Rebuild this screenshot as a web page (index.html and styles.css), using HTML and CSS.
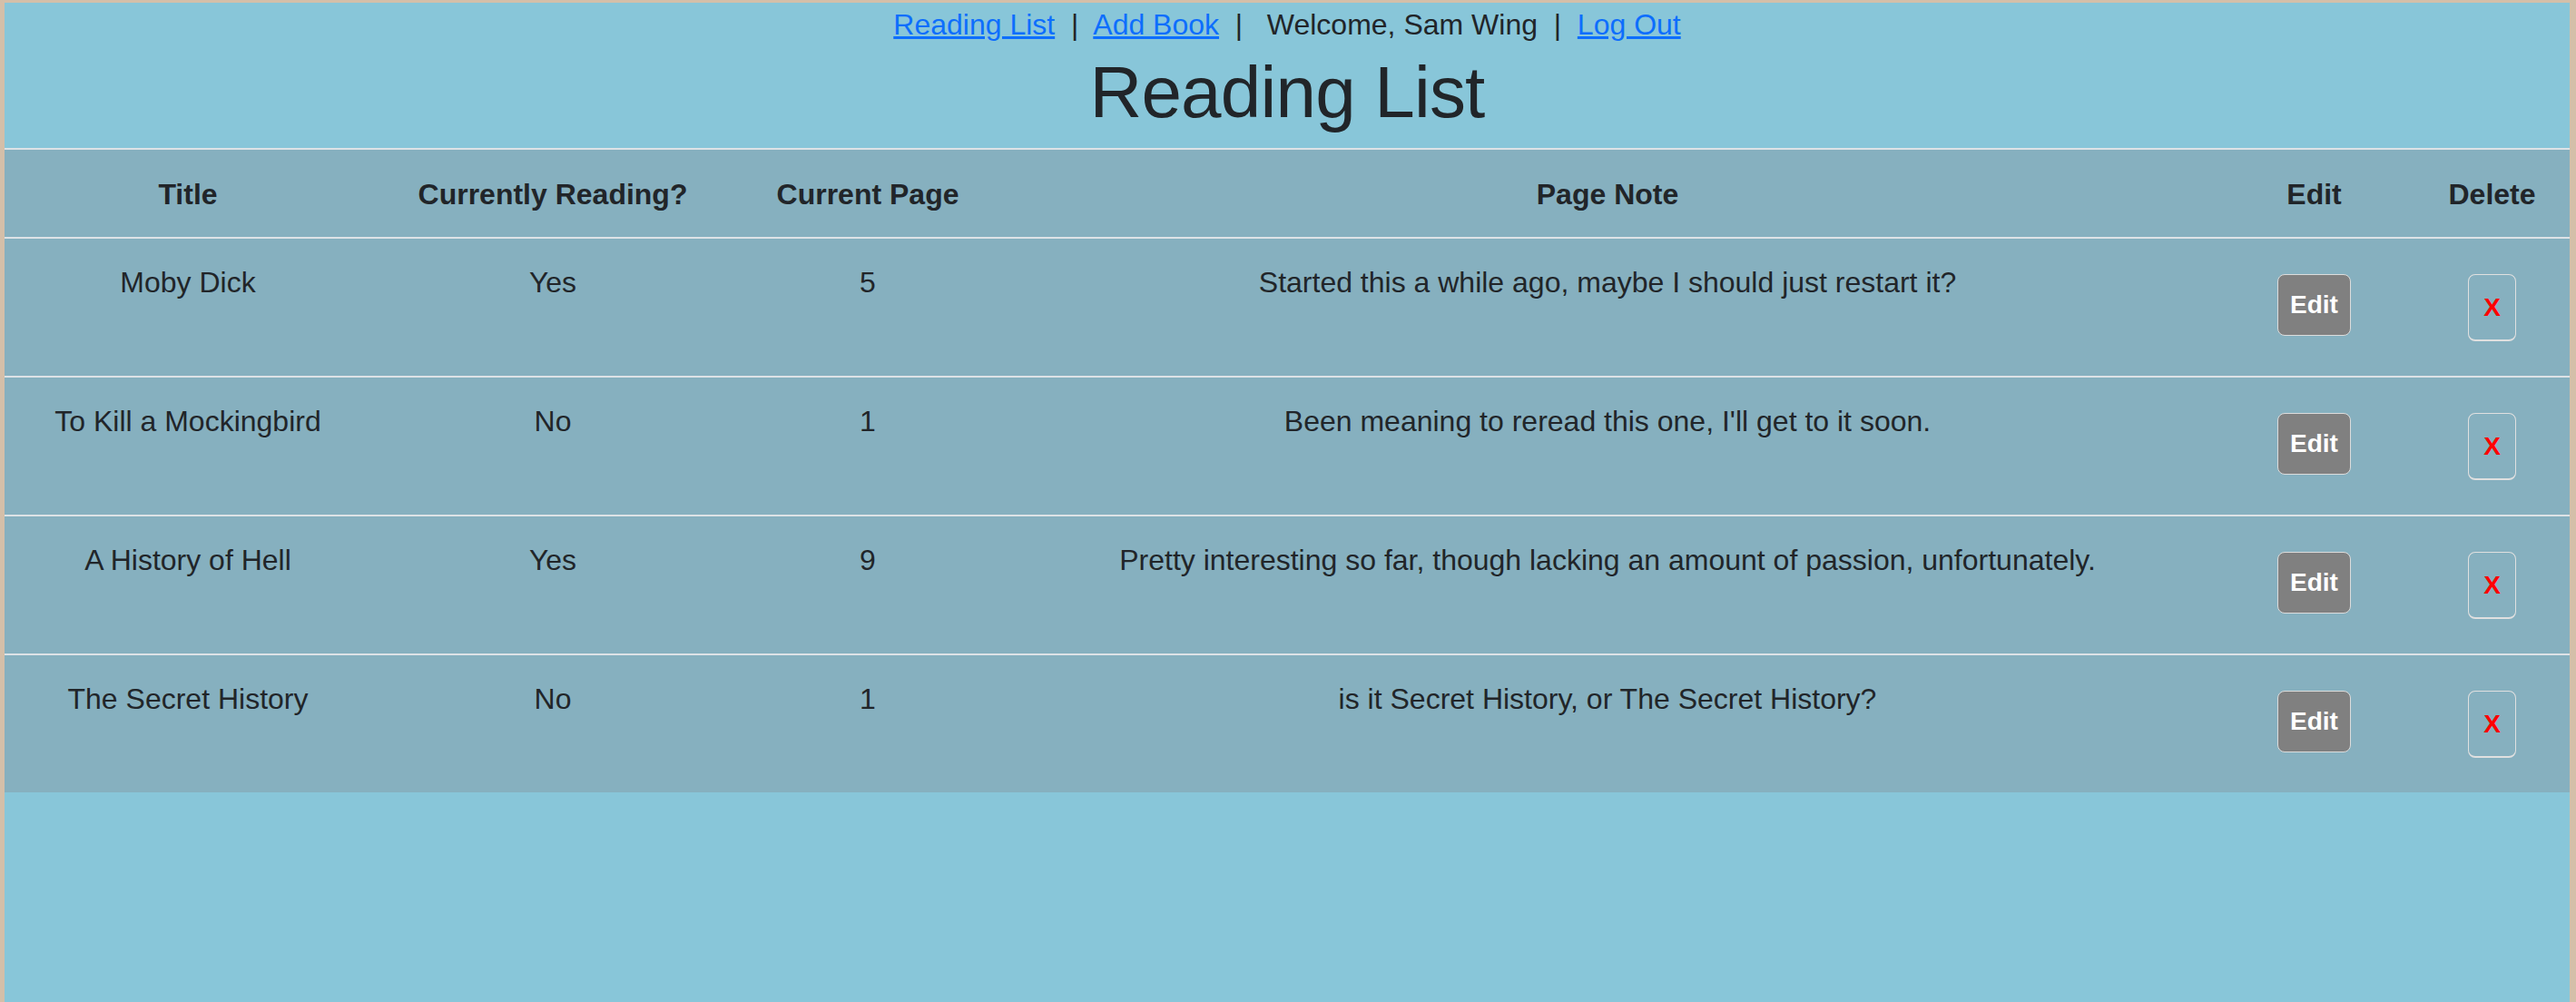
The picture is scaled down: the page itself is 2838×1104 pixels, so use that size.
FILE: index.html
```html
<!DOCTYPE html>
<html lang="en">
<head>
<meta charset="utf-8">
<title>Reading List</title>
<link rel="stylesheet" href="styles.css">
</head>
<body>
<div class="page">
  <nav class="topnav"><a href="#">Reading List</a>&nbsp; |&nbsp; <a href="#">Add Book</a>&nbsp; |&nbsp; &nbsp;Welcome, Sam Wing&nbsp; |&nbsp; <a href="#">Log Out</a></nav>
  <h1 class="title">Reading List</h1>
  <table class="books">
    <colgroup>
      <col class="c-title">
      <col class="c-reading">
      <col class="c-page">
      <col class="c-note">
      <col class="c-edit">
      <col class="c-delete">
    </colgroup>
    <thead>
      <tr>
        <th>Title</th>
        <th>Currently Reading?</th>
        <th>Current Page</th>
        <th>Page Note</th>
        <th>Edit</th>
        <th>Delete</th>
      </tr>
    </thead>
    <tbody>
      <tr>
        <td>Moby Dick</td>
        <td>Yes</td>
        <td>5</td>
        <td>Started this a while ago, maybe I should just restart it?</td>
        <td><button class="btn-edit" type="button">Edit</button></td>
        <td><button class="btn-delete" type="button">X</button></td>
      </tr>
      <tr>
        <td>To Kill a Mockingbird</td>
        <td>No</td>
        <td>1</td>
        <td>Been meaning to reread this one, I'll get to it soon.</td>
        <td><button class="btn-edit" type="button">Edit</button></td>
        <td><button class="btn-delete" type="button">X</button></td>
      </tr>
      <tr>
        <td>A History of Hell</td>
        <td>Yes</td>
        <td>9</td>
        <td>Pretty interesting so far, though lacking an amount of passion, unfortunately.</td>
        <td><button class="btn-edit" type="button">Edit</button></td>
        <td><button class="btn-delete" type="button">X</button></td>
      </tr>
      <tr>
        <td>The Secret History</td>
        <td>No</td>
        <td>1</td>
        <td>is it Secret History, or The Secret History?</td>
        <td><button class="btn-edit" type="button">Edit</button></td>
        <td><button class="btn-delete" type="button">X</button></td>
      </tr>
    </tbody>
  </table>
</div>
</body>
</html>
```

FILE: styles.css
```css
html, body {
  margin: 0;
  padding: 0;
}

body {
  background: #d4bfa9;
  font-family: "Liberation Sans", Arial, sans-serif;
  font-size: 32px;
  line-height: 1.5;
  color: #212529;
}

.page {
  margin: 3px 7px 0 5px;
  background: #88c6d9;
  min-height: calc(100vh - 3px);
}

.topnav {
  text-align: center;
  height: 48px;
}

.topnav a {
  color: #0d6efd;
  text-decoration: underline;
}

.title {
  margin: 3px 0 13px;
  font-size: 80px;
  font-weight: 500;
  line-height: 96px;
  text-align: center;
  letter-spacing: -0.8px;
}

.books {
  width: 100%;
  table-layout: fixed;
  border-collapse: separate;
  border-spacing: 0;
  background: #86b0bf;
}

.c-title { width: 404px; }
.c-reading { width: 400px; }
.c-page { width: 294px; }
.c-note { width: 1336px; }
.c-edit { width: 221px; }
.c-delete { width: 171px; }

.books th,
.books td {
  border-top: 2px solid #dde2e6;
  padding: 24px 16px;
  text-align: center;
  vertical-align: top;
}

.books th {
  font-weight: 700;
  padding-top: 25px;
  padding-bottom: 23px;
}

.btn-edit,
.btn-delete {
  display: block;
  margin: 15px auto 0;
  font-family: "Liberation Sans", Arial, sans-serif;
  font-size: 28px;
  font-weight: 700;
  line-height: 42px;
  border-radius: 8px;
  cursor: pointer;
}

.btn-edit {
  background: #808080;
  color: #ffffff;
  padding: 12px 13px;
  border: 1px solid #dcdcdc;
}

.btn-delete {
  background: transparent;
  color: #ff0000;
  padding: 15px 16px 14px;
  border: 1px solid #e0e0e0;
  border-bottom-width: 2px;
  margin-bottom: 14px;
}
```
